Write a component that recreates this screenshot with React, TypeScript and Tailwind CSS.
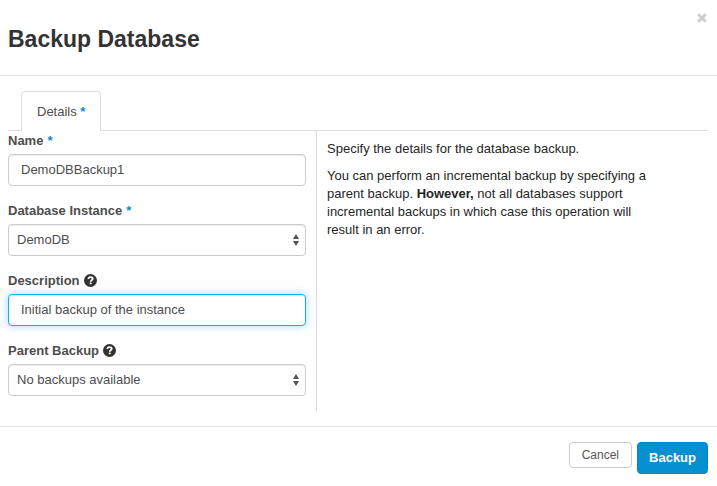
import type { ReactNode } from "react";

const CONTROL =
  "block h-8 w-full rounded border bg-white text-[13px] leading-[18px] text-[#4d4d4d] outline-none";
const RESTING = "border-[#cccccc] shadow-[inset_0_1px_1px_rgba(0,0,0,0.075)]";

function Required() {
  return <span className="font-bold text-[#0b88cc]">*</span>;
}

function HelpIcon() {
  return (
    <svg viewBox="0 0 14 14" className="size-[13px] shrink-0" aria-hidden="true">
      <circle cx="7" cy="7" r="7" fill="#333333" />
      <path
        d="M4.7 5.5C4.7 4.1 5.7 3.3 7.1 3.3C8.5 3.3 9.4 4.1 9.4 5.2C9.4 6.7 7.2 6.7 7.2 8.3"
        fill="none"
        stroke="#ffffff"
        strokeWidth="1.9"
      />
      <rect x="6.2" y="9.2" width="2" height="1.8" fill="#ffffff" />
    </svg>
  );
}

function Field({ id, label, mark, children }: { id: string; label: string; mark: ReactNode; children: ReactNode }) {
  return (
    <div className="mb-[15px]">
      <label
        htmlFor={id}
        className="mb-1 flex h-[19px] items-center gap-1 text-[13px] leading-[19px] font-bold text-[#4d4d4d]"
      >
        {label} {mark}
      </label>
      {children}
    </div>
  );
}

function Select({ id, option }: { id: string; option: string }) {
  return (
    <div className="relative">
      <select id={id} className={`${CONTROL} ${RESTING} appearance-none pr-6 pl-2`}>
        <option>{option}</option>
      </select>
      <svg
        viewBox="0 0 6 12"
        className="pointer-events-none absolute top-[10px] right-[7px] h-3 w-[6px]"
        fill="#555555"
        aria-hidden="true"
      >
        <path d="M3 0L6 5H0Z" />
        <path d="M0 7H6L3 12Z" />
      </svg>
    </div>
  );
}

export default function App() {
  return (
    <div className="bg-white font-['Liberation_Sans',Arial,sans-serif] text-[13px] text-[#333333]">
      <header className="flex h-[76px] items-start justify-between border-b border-[#e5e5e5] pr-[9px] pl-2">
        <h1 className="pt-6 text-[23px] leading-[30px] font-bold">Backup Database</h1>
        <button type="button" aria-label="Close" className="mt-3 flex size-3 items-center justify-center">
          <svg viewBox="0 0 10 10" className="size-[10px]" aria-hidden="true">
            <path d="M1.2 1.2L8.8 8.8M8.8 1.2L1.2 8.8" stroke="#cccccc" strokeWidth="2.8" />
          </svg>
        </button>
      </header>

      <form onSubmit={(event) => event.preventDefault()}>
        <div className="pt-[15px] pr-[9px] pl-2">
          <div role="tablist" className="flex border-b border-[#dddddd] pl-[13px]">
            <button
              type="button"
              role="tab"
              aria-selected="true"
              className="-mb-px h-10 rounded-t border border-b-0 border-[#dddddd] bg-white px-[15px] text-[13px] text-[#4d4d4d]"
            >
              Details <Required />
            </button>
          </div>

          <div className="grid grid-cols-[11fr_14fr]">
            <div className="pr-[10px]">
              <Field id="name" label="Name" mark={<Required />}>
                <input id="name" defaultValue="DemoDBBackup1" className={`${CONTROL} ${RESTING} px-3 pb-0.5`} />
              </Field>
              <Field id="instance" label="Database Instance" mark={<Required />}>
                <Select id="instance" option="DemoDB" />
              </Field>
              <Field id="description" label="Description" mark={<HelpIcon />}>
                <input
                  id="description"
                  defaultValue="Initial backup of the instance"
                  className={`${CONTROL} border-[#0cb0ea] px-3 pb-0.5 shadow-[inset_0_1px_1px_rgba(0,0,0,0.075),0_0_8px_rgba(12,160,234,0.4)]`}
                />
              </Field>
              <Field id="parent" label="Parent Backup" mark={<HelpIcon />}>
                <Select id="parent" option="No backups available" />
              </Field>
            </div>

            <div className="space-y-[9px] border-l border-[#dddddd] pt-[9px] pr-[45px] pl-[10px] leading-[18px] text-[#262626]">
              <p>Specify the details for the database backup.</p>
              <p>
                You can perform an incremental backup by specifying a parent backup. <strong>However,</strong> not all
                databases support incremental backups in which case this operation will result in an error.
              </p>
            </div>
          </div>
        </div>

        <footer className="mt-[15px] flex items-start justify-end gap-[5px] border-t border-[#e5e5e5] pt-[15px] pr-[9px] pb-3">
          <button
            type="button"
            className="h-[26px] rounded border border-[#cccccc] bg-white px-3 text-[12px] leading-[18px] text-[#555555]"
          >
            Cancel
          </button>
          <button
            type="submit"
            className="h-8 rounded border border-[#0684c4] bg-[#068fd1] px-[11px] text-[13px] leading-[18px] font-bold text-white"
          >
            Backup
          </button>
        </footer>
      </form>
    </div>
  );
}
